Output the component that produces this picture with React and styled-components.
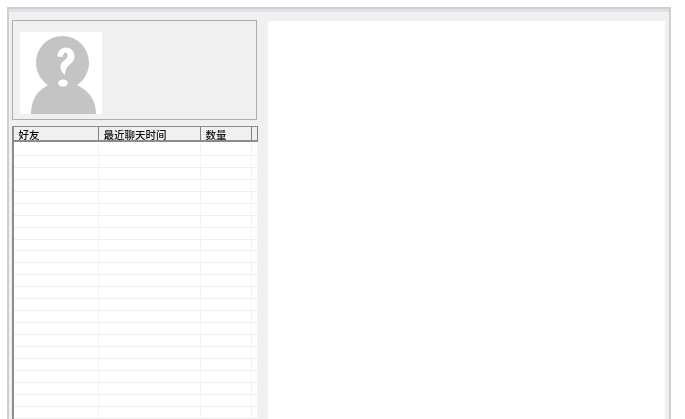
import React from "react";
import styled, { createGlobalStyle } from "styled-components";

const GlobalStyle = createGlobalStyle`
  html, body {
    margin: 0;
    padding: 0;
    height: 100%;
    background: #fff;
    overflow: hidden;
  }
  body {
    font-family: "Noto Sans CJK SC", "Liberation Sans", sans-serif;
  }
`;

const columns = [
  { title: "好友", width: 85 },
  { title: "最近聊天时间", width: 102 },
  { title: "数量", width: 51 },
  { title: "", width: 6 },
];

const rows = Array.from({ length: 23 }, (_, i) => i);

function Avatar() {
  return (
    <AvatarBox>
      <svg width="82" height="82" viewBox="0 0 82 82">
        <path
          d="M11 82C11 68 17 59 28 53C20 48 16 39 16 30.5C16 16 28 4 42.5 4C57 4 69 16 69 30.5C69 39 65 48 57 53C69 59 76 68 76 82Z"
          fill="#c4c4c4"
        />
        <path
          d="M37.5 24.5C37.5 19 41.5 15.5 46 15.5C50.5 15.5 54.5 19 54.5 24C54.5 29.5 50.5 31.5 48 34C46 36 45.5 38.5 45 43C41.5 40 39.5 36 41 32C42.5 28.5 47.5 27.5 47.5 23.5C47.5 21.5 46.5 20.5 45.5 20.5C44 20.5 43 22 43 25Z"
          fill="#fff"
        />
        <ellipse cx="43" cy="51" rx="5" ry="3.5" fill="#fff" />
      </svg>
    </AvatarBox>
  );
}

function App() {
  return (
    <>
      <GlobalStyle />
      <Page>
        <Frame>
          <TitleStrip />
          <Body>
            <LeftColumn>
              <ProfilePanel>
                <Avatar />
              </ProfilePanel>
              <FriendTable>
                <HeaderRow>
                  {columns.map((col, i) => (
                    <HeaderCell key={i} width={col.width}>
                      {col.title}
                    </HeaderCell>
                  ))}
                </HeaderRow>
                {rows.map((r) => (
                  <Row key={r}>
                    {columns.map((col, i) => (
                      <Cell key={i} width={col.width} />
                    ))}
                  </Row>
                ))}
              </FriendTable>
            </LeftColumn>
            <ChatPanel />
          </Body>
        </Frame>
      </Page>
    </>
  );
}

const Page = styled.div`
  height: 419px;
  padding: 7px 14px 0 7px;
  box-sizing: border-box;
  overflow: hidden;
`;

const Frame = styled.div`
  height: 100%;
  box-sizing: border-box;
  border: solid #cfcfcf;
  border-width: 2px 2px 0 2px;
  background: #f0f0f0;
  display: flex;
  flex-direction: column;
`;

const TitleStrip = styled.div`
  height: 3px;
  background: linear-gradient(#dcdcec, #e4e4ee);
  flex-shrink: 0;
`;

const Body = styled.div`
  flex: 1;
  display: flex;
  min-height: 0;
  padding: 8px 4px 0 3px;
  gap: 10px;
`;

const LeftColumn = styled.div`
  width: 246px;
  display: flex;
  flex-direction: column;
  gap: 6px;
  flex-shrink: 0;
`;

const ProfilePanel = styled.div`
  width: 245px;
  height: 100px;
  box-sizing: border-box;
  border: 1px solid #aeaeae;
  padding: 11px 7px;
  background: #f0f0f0;
`;

const AvatarBox = styled.div`
  width: 82px;
  height: 82px;
  background: #fff;
  filter: blur(0.4px);
`;

const FriendTable = styled.div`
  flex: 1;
  background: #fff;
  border-left: 2px solid #8c8c8c;
  overflow: hidden;
`;

const HeaderRow = styled.div`
  display: flex;
  height: 16px;
  margin-bottom: 2px;
  box-sizing: border-box;
  border-top: 1px solid #8c8c8c;
  border-bottom: 2px solid #8c8c8c;
  background: #f0f0f0;
  filter: blur(0.3px);
`;

const HeaderCell = styled.div`
  width: ${(p) => p.width}px;
  flex-shrink: 0;
  box-sizing: border-box;
  padding-left: 4.5px;
  border-right: 1px solid #808080;
  font-size: 10.5px;
  font-weight: 500;
  line-height: 15px;
  color: #111;
  white-space: nowrap;
`;

const Row = styled.div`
  display: flex;
  height: 11.95px;
  box-sizing: border-box;
  border-bottom: 1px solid #efefef;
`;

const Cell = styled.div`
  width: ${(p) => p.width}px;
  flex-shrink: 0;
  box-sizing: border-box;
  border-right: 1px solid #f4f4f4;
`;

const ChatPanel = styled.div`
  flex: 1;
  margin-top: 1px;
  background: #fff;
`;

export default App;
